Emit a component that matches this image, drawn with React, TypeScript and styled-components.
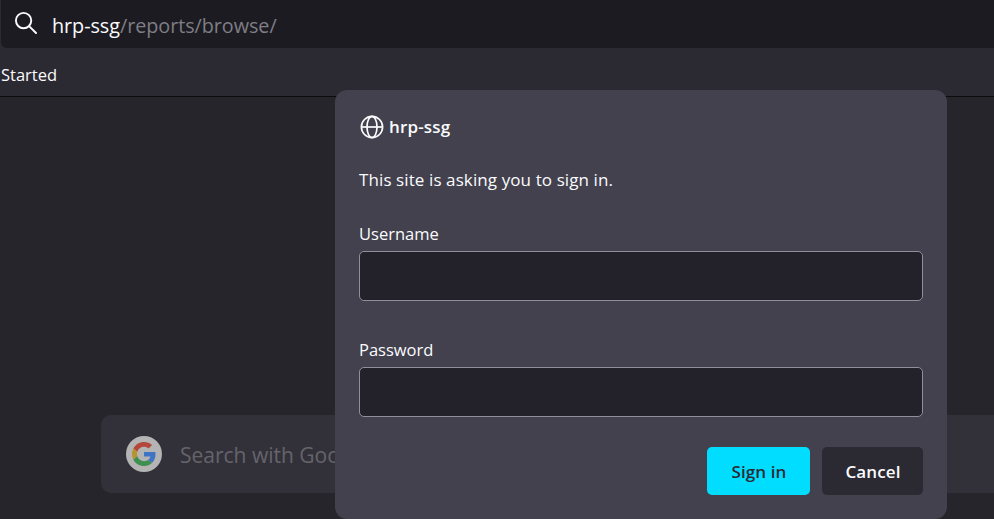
import React from 'react';
import styled, { createGlobalStyle } from 'styled-components';

const GlobalStyle = createGlobalStyle`
  html, body {
    margin: 0;
    padding: 0;
    background: #26252c;
  }
  * {
    box-sizing: border-box;
  }
`;

const App: React.FC = () => {
  return (
    <Page>
      <GlobalStyle />
      <Toolbar>
        <UrlBar>
          <SearchIcon viewBox="0 0 24 24" fill="none">
            <circle cx="10" cy="10" r="8" stroke="#fbfbfe" strokeWidth="2" />
            <path d="M16 16 L23 23" stroke="#fbfbfe" strokeWidth="2" strokeLinecap="round" />
          </SearchIcon>
          <UrlText>
            hrp-ssg<UrlPath>/reports/browse/</UrlPath>
          </UrlText>
        </UrlBar>
      </Toolbar>
      <BookmarksBar>Started</BookmarksBar>
      <Content>
        <SearchBox>
          <GoogleBadge>
            <svg viewBox="0 0 48 48" width="24" height="24">
              <path fill="#b3473c" d="M24 9.5c3.5 0 6.700 1.200 9.200 3.600l6.900-6.900C35.900 2.400 30.500 0 24 0 14.600 0 6.500 5.400 2.600 13.200l8 6.200C12.400 13.700 17.700 9.500 24 9.500z" />
              <path fill="#3f74c4" d="M47 24.500c0-1.600-.1-3.100-.4-4.500H24v9h12.900c-.6 3-2.200 5.400-4.800 7.100l7.700 6C44.300 38 47 31.800 47 24.500z" />
              <path fill="#b8922c" d="M10.600 28.600c-.5-1.400-.8-3-.8-4.600s.3-3.200.8-4.600l-8-6.200C.9 16.500 0 20.100 0 24s.9 7.500 2.600 10.800l8-6.200z" />
              <path fill="#3f8f50" d="M24 48c6.500 0 11.900-2.100 15.800-5.800l-7.700-6c-2.100 1.400-4.900 2.300-8.100 2.300-6.300 0-11.600-4.200-13.400-9.900l-8 6.200C6.500 42.600 14.600 48 24 48z" />
            </svg>
          </GoogleBadge>
          <SearchPlaceholder>Search with Google or enter address</SearchPlaceholder>
        </SearchBox>
      </Content>
      <Dialog>
        <DialogHeader>
          <GlobeIcon viewBox="0 0 24 24" fill="none">
            <circle cx="12" cy="12" r="10.600" stroke="#fbfbfe" strokeWidth="1.700" />
            <ellipse cx="12" cy="12" rx="5" ry="10.600" stroke="#fbfbfe" strokeWidth="1.700" />
            <path d="M1.500 12 H22.500" stroke="#fbfbfe" strokeWidth="1.700" />
          </GlobeIcon>
          <SiteName>hrp-ssg</SiteName>
        </DialogHeader>
        <Message>This site is asking you to sign in.</Message>
        <Field>
          <FieldLabel htmlFor="username">Username</FieldLabel>
          <FieldInput id="username" type="text" />
        </Field>
        <Field>
          <FieldLabel htmlFor="password">Password</FieldLabel>
          <FieldInput id="password" type="password" />
        </Field>
        <Actions>
          <Button $primary>Sign in</Button>
          <Button>Cancel</Button>
        </Actions>
      </Dialog>
    </Page>
  );
};

export default App;

const font = `"Open Sans", "Noto Sans", sans-serif`;

const Page = styled.div`
  position: relative;
  width: 994px;
  height: 519px;
  overflow: hidden;
  display: flex;
  flex-direction: column;
  font-family: ${font};
  color: #fbfbfe;
`;

const Toolbar = styled.div`
  height: 48px;
  padding-left: 1px;
  background: #2b2a33;
  flex-shrink: 0;
`;

const UrlBar = styled.div`
  height: 48px;
  display: flex;
  align-items: center;
  padding-left: 13px;
  background: #1c1b22;
  border-bottom-left-radius: 6px;
`;

const SearchIcon = styled.svg`
  width: 23px;
  height: 23px;
  margin-top: -3px;
`;

const UrlText = styled.div`
  margin: 2px 0 0 15px;
  font-size: 19.800px;
  letter-spacing: -0.050px;
  color: #fbfbfe;
`;

const UrlPath = styled.span`
  color: #7f7e85;
`;

const BookmarksBar = styled.div`
  height: 49px;
  padding: 16px 0 0 1px;
  background: #2b2a33;
  border-bottom: 1px solid #0c0c0d;
  font-size: 16.500px;
  line-height: 22px;
  flex-shrink: 0;
`;

const Content = styled.div`
  flex: 1;
  background: #26252c;
  padding: 318px 0 0 101px;
`;

const SearchBox = styled.div`
  height: 78px;
  display: flex;
  align-items: center;
  padding-left: 25px;
  background: #32313a;
  border-radius: 10px 0 0 10px;
`;

const GoogleBadge = styled.div`
  width: 36px;
  height: 36px;
  border-radius: 50%;
  background: #b4b4b4;
  display: flex;
  align-items: center;
  justify-content: center;
`;

const SearchPlaceholder = styled.div`
  margin: 2px 0 0 18px;
  font-size: 21px;
  color: #65646b;
  white-space: nowrap;
`;

const Dialog = styled.div`
  position: absolute;
  left: 335px;
  top: 90px;
  width: 612px;
  height: 429px;
  padding: 24px 24px 0;
  background: #42414d;
  border-radius: 12px;
  display: flex;
  flex-direction: column;
`;

const DialogHeader = styled.div`
  height: 26px;
  display: flex;
  align-items: center;
`;

const GlobeIcon = styled.svg`
  width: 24px;
  height: 24px;
  margin-left: 1px;
`;

const SiteName = styled.div`
  margin: -2px 0 0 5px;
  font-size: 17px;
  font-weight: 600;
  letter-spacing: 0.150px;
`;

const Message = styled.div`
  margin-top: 29px;
  font-size: 17px;
  line-height: 22px;
  letter-spacing: 0.100px;
`;

const Field = styled.div`
  margin-top: 32px;
  display: flex;
  flex-direction: column;

  & + & {
    margin-top: 38px;
  }
`;

const FieldLabel = styled.label`
  font-size: 16.500px;
  line-height: 22px;
`;

const FieldInput = styled.input`
  margin-top: 6px;
  height: 50px;
  width: 564px;
  background: #23222b;
  border: 1px solid #8f8f9d;
  border-radius: 5px;
  outline: none;
  color: #fbfbfe;
`;

const Actions = styled.div`
  margin-top: 30px;
  display: flex;
  justify-content: flex-end;
  gap: 12px;
`;

const Button = styled.button<{ $primary?: boolean }>`
  height: 48px;
  width: ${(props) => (props.$primary ? '103px' : '101px')};
  padding: 0 0 0 1px;
  border: none;
  border-radius: 5px;
  background: ${(props) => (props.$primary ? '#00ddff' : '#2b2a33')};
  color: ${(props) => (props.$primary ? '#2b2a33' : '#fbfbfe')};
  font-family: ${font};
  font-size: 17px;
  font-weight: 600;
  letter-spacing: 0.100px;
`;
